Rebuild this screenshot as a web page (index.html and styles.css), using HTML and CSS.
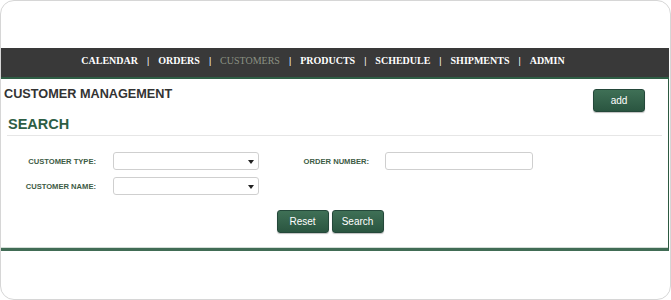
FILE: index.html
```html
<!DOCTYPE html>
<html lang="en">
<head>
	<meta charset="utf-8" />
	<title>Customer Management</title>
	<link rel="stylesheet" href="styles.css">
</head>
<body>
	<div class="frame">
		<div class="nav">
			<a href="#">CALENDAR</a><span class="sep">|</span>
			<a href="#">ORDERS</a><span class="sep">|</span>
			<a href="#" class="current">CUSTOMERS</a><span class="sep">|</span>
			<a href="#">PRODUCTS</a><span class="sep">|</span>
			<a href="#">SCHEDULE</a><span class="sep">|</span>
			<a href="#">SHIPMENTS</a><span class="sep">|</span>
			<a href="#">ADMIN</a>
		</div>

		<div class="panel">
			<div class="title-row">
				<h1>CUSTOMER MANAGEMENT</h1>
				<button class="btn btn-add">add</button>
			</div>

			<h2 class="search-title">SEARCH</h2>

			<form class="search-form">
				<div class="row">
					<label class="lbl">CUSTOMER TYPE:</label>
					<div class="select"><span class="arrow"></span></div>
					<label class="lbl lbl-wide">ORDER NUMBER:</label>
					<input type="text" class="text-input">
				</div>
				<div class="row">
					<label class="lbl">CUSTOMER NAME:</label>
					<div class="select"><span class="arrow"></span></div>
				</div>
				<div class="actions">
					<button type="button" class="btn">Reset</button>
					<button type="button" class="btn">Search</button>
				</div>
			</form>
		</div>
	</div>
</body>
</html>
```

FILE: styles.css
```css
html, body {
	margin:0;
	padding:0;
	background:#fff;
}
.frame {
	width:671px;
	height:300px;
	box-sizing:border-box;
	border:1px solid #d6d6d6;
	border-radius:14px;
	padding-top:47px;
	overflow:hidden;
}
/*-------------------*/
.nav {
	display:flex;
	justify-content:center;
	margin-left:-1px;
	width:669px;
	height:31px;
	box-sizing:border-box;
	padding:6px 23px 0 0;
	background:#393939;
	border-bottom:2px solid #2f5e45;
	font-family:"Liberation Serif", serif;
	font-weight:bold;
	font-size:10px;
	line-height:14px;
}
.nav a {
	color:#fff;
	text-decoration:none;
}
.nav a.current {
	color:#8b9183;
	font-weight:normal;
}
.nav .sep {
	color:#fff;
	margin:0 9px;
}
/*-------------------*/
.panel {
	margin-left:-1px;
	width:669px;
	height:172px;
	box-sizing:border-box;
	border-right:1px solid #2d5a41;
	border-bottom:3px solid #416c55;
	box-shadow:inset 0 -1px 0 #d3ddd7;
	font-family:"Liberation Sans", Arial, sans-serif;
	padding-top:8px;
}
.title-row {
	display:flex;
	justify-content:space-between;
	align-items:flex-start;
	padding:0 23px 0 4px;
}
.title-row h1 {
	margin:0;
	font-size:12.7px;
	line-height:15px;
	color:#333;
}
.btn {
	background:linear-gradient(#3f7056, #2a5540);
	color:#fff;
	border:1px solid #24483a;
	border-radius:3px;
	font-family:"Liberation Sans", Arial, sans-serif;
	font-size:10px;
	height:23px;
	width:52px;
	padding:0;
	box-shadow:0 1px 1px rgba(0,0,0,0.25);
}
.btn-add {
	margin-top:2px;
}
.search-title {
	margin:3px 6px 0 7px;
	padding:0 0 2px 1px;
	border-bottom:1px solid #e6e6e6;
	font-size:14.5px;
	line-height:18px;
	color:#2e5e45;
}
/*-------------------*/
.search-form {
	padding-top:16px;
}
.row {
	display:flex;
	align-items:center;
	height:18px;
	margin-bottom:7px;
}
.lbl {
	width:96px;
	text-align:right;
	font-size:7.6px;
	font-weight:bold;
	color:#3d5c45;
	margin-right:17px;
}
.lbl.lbl-wide {
	width:110px;
	margin-right:16px;
}
.select {
	position:relative;
	width:146px;
	height:18px;
	box-sizing:border-box;
	border:1px solid #cfcfcf;
	border-radius:3px;
	background:#fff;
}
.select .arrow {
	position:absolute;
	right:4px;
	top:7px;
	border-left:3px solid transparent;
	border-right:3px solid transparent;
	border-top:4px solid #222;
}
.text-input {
	width:148px;
	height:18px;
	box-sizing:border-box;
	border:1px solid #cfcfcf;
	border-radius:3px;
	margin:0;
	padding:0 4px;
}
.actions {
	display:flex;
	justify-content:center;
	gap:3px;
	padding-top:8px;
	padding-right:8px;
}
```
